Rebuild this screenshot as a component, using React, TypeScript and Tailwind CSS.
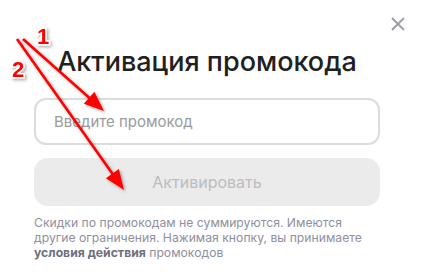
import { FC } from "react"

const Annotations: FC = () => (
  <svg className="absolute inset-0 pointer-events-none" width="422" height="276" viewBox="0 0 422 276">
    <defs>
      <filter id="shadow" x="-20%" y="-20%" width="140%" height="140%">
        <feDropShadow dx="1.5" dy="1.5" stdDeviation="1.5" floodColor="#000" floodOpacity="0.35" />
      </filter>
    </defs>
    <g filter="url(#shadow)" fill="#ff0000" stroke="#ff0000">
      <line x1="23" y1="39" x2="90" y2="98.5" strokeWidth="2.6" />
      <polygon points="104,111 83.8,103.7 94.4,91.7" stroke="none" />
      <line x1="17" y1="39" x2="113" y2="174.5" strokeWidth="2.6" />
      <polygon points="124,190 105.9,178.3 118.9,169.1" stroke="none" />
    </g>
    <g filter="url(#shadow)" fontFamily="'Liberation Sans', Arial, sans-serif" fontWeight="700" fontSize="22" fill="#ff0000" stroke="#fff" strokeWidth="3" style={{ paintOrder: "stroke" }}>
      <text x="37" y="44">1</text>
      <text x="12" y="77">2</text>
    </g>
  </svg>
)

export default function App() {
  return (
    <div className="relative w-[422px] h-[276px] overflow-hidden bg-white font-['Inter','Noto_Sans',sans-serif]">
      <button className="absolute right-[17px] top-[17px] w-[14px] h-[14px] text-[#9a9aab]" aria-label="Закрыть">
        <svg width="14" height="14" viewBox="0 0 14 14" fill="none" stroke="currentColor" strokeWidth="1.8">
          <path d="M1 1L13 13M13 1L1 13" />
        </svg>
      </button>

      <div className="ml-[34px] w-[346px] pt-[44px] flex flex-col">
        <h1 className="text-center text-[27px] leading-[36px] font-medium text-[#21201f]">
          Активация промокода
        </h1>

        <input
          type="text"
          placeholder="Введите промокод"
          className="mt-[18px] h-[47px] w-full rounded-[12px] border-2 border-[#dcdcdc] px-[18px] text-[15px] text-[#21201f] placeholder:text-[#9b9b9b] outline-none"
        />

        <button
          disabled
          className="mt-[13px] h-[48px] w-full rounded-[14px] bg-[#ebebeb] text-[16px] text-[#bdbdbd]"
        >
          Активировать
        </button>

        <p className="mt-[9px] text-[12.2px] leading-[15px] text-[#8f8f9e]">
          Скидки по промокодам не суммируются. Имеются другие ограничения. Нажимая кнопку, вы принимаете{" "}
          <span className="font-bold text-[#6f6f7e]">условия действия</span> промокодов
        </p>
      </div>

      <Annotations />
    </div>
  )
}
